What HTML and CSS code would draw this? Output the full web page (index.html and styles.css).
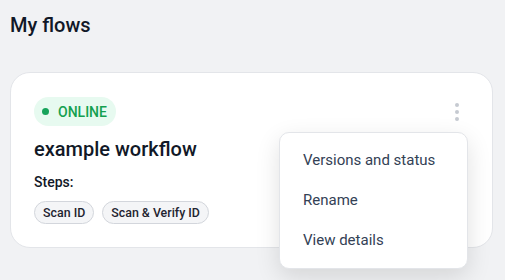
FILE: index.html
```html
<!DOCTYPE html>
<html lang="en">
<head>
    <meta charset="UTF-8">
    <meta name="viewport" content="width=device-width, initial-scale=1.0">
    <title>My flows</title>
    <link rel="stylesheet" href="styles.css">
</head>
<body>
    <h1 class="page-title">My flows</h1>

    <div class="flow-card">
        <div class="card-top">
            <span class="status-badge"><span class="status-dot"></span>ONLINE</span>
            <button class="kebab" aria-label="More">
                <span></span><span></span><span></span>
            </button>
        </div>
        <h2 class="flow-name">example workflow</h2>
        <div class="steps-label">Steps:</div>
        <div class="chips">
            <span class="chip">Scan ID</span>
            <span class="chip">Scan &amp; Verify ID</span>
        </div>

        <!-- open menu -->
        <ul class="menu">
            <li>Versions and status</li>
            <li>Rename</li>
            <li>View details</li>
        </ul>
    </div>
</body>
</html>
```

FILE: styles.css
```css
html {
    background-color: #f1f2f4;
}
body {
    font-family: Roboto, "Noto Sans", sans-serif;
    color: #111827;
    margin: 0;
    padding: 12px 12px 0 10px;
    min-height: 280px;
    box-sizing: border-box;
}
.page-title {
    margin: 0;
    font-size: 20px;
    line-height: 26px;
    font-weight: 500;
}
.flow-card {
    position: relative;
    margin-top: 34px;
    background-color: white;
    border: 1px solid #e3e5e9;
    border-radius: 20px;
    padding: 24px 24px 23px 23px;
}
.card-top {
    display: flex;
    justify-content: space-between;
    align-items: center;
}
.status-badge {
    display: inline-flex;
    align-items: center;
    gap: 9px;
    height: 29px;
    padding: 0 9px 0 8px;
    border-radius: 15px;
    background-color: #e7faf0;
    color: #14a04f;
    font-size: 14px;
    font-weight: 500;
}
.status-dot {
    width: 7px;
    height: 7px;
    border-radius: 50%;
    background-color: #16a35a;
}
.kebab {
    display: flex;
    flex-direction: column;
    align-items: center;
    gap: 3px;
    width: 20px;
    padding: 0;
    margin-right: 1px;
    border: none;
    background: none;
    cursor: pointer;
}
.kebab span {
    width: 4px;
    height: 4px;
    border-radius: 50%;
    background-color: #c6cad1;
}
.flow-name {
    margin: 9px 0 0;
    font-size: 20px;
    line-height: 28px;
    font-weight: 500;
}
.steps-label {
    margin-top: 10px;
    font-size: 14px;
    line-height: 18px;
    font-weight: 500;
}
.chips {
    display: flex;
    gap: 8px;
    margin-top: 10px;
}
.chip {
    display: inline-block;
    padding: 0 8px;
    height: 21px;
    line-height: 21px;
    border: 1px solid #d3d6dc;
    border-radius: 12px;
    background-color: #f4f5f7;
    font-size: 12.4px;
    font-weight: 500;
    color: #1f2430;
}
.menu {
    position: absolute;
    top: 59px;
    right: 24px;
    width: 187px;
    margin: 0;
    padding: 7px 0 8px;
    list-style: none;
    background-color: white;
    border: 1px solid #e3e5e9;
    border-radius: 10px;
    box-shadow: 0 8px 24px rgba(0, 0, 0, 0.12);
}
.menu li {
    height: 40px;
    line-height: 40px;
    padding-left: 23px;
    font-size: 15px;
    color: #334155;
    cursor: pointer;
}
```
